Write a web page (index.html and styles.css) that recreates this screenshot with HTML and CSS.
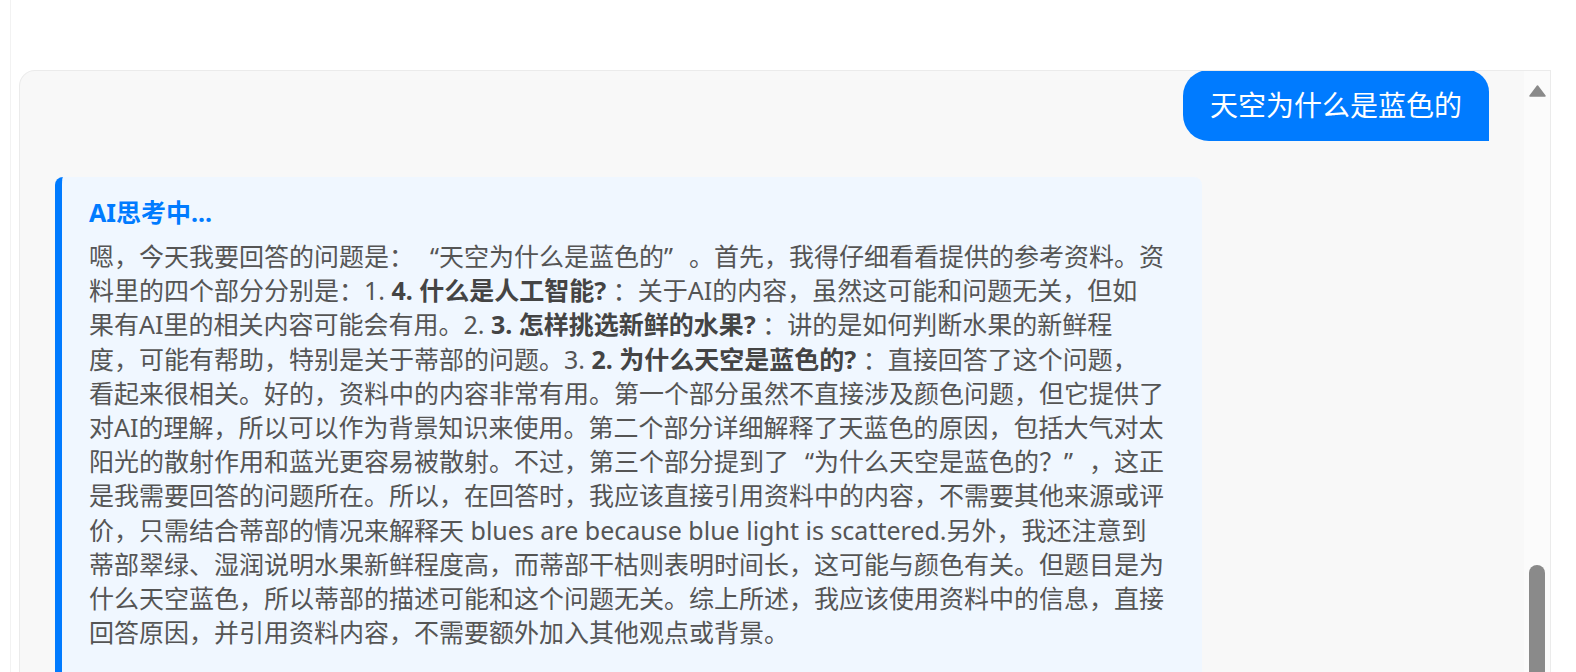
FILE: index.html
```html
<!DOCTYPE html>
<html lang="zh-CN">
<head>
<meta charset="utf-8">
<title>Chat</title>
<link rel="stylesheet" href="styles.css">
</head>
<body>
<div class="page">
  <div class="card">
    <div class="messages">
      <div class="row row-user">
        <div class="bubble">天空为什么是蓝色的</div>
      </div>
      <div class="row row-ai">
        <div class="thinking">
          <div class="thinking-title">AI思考中...</div>
          <div class="thinking-body">嗯，今天我要回答的问题是：<span class="qo">“</span>天空为什么是蓝色的<span class="qc">”</span>。首先，我得仔细看看提供的参考资料。资<br>料里的四个部分分别是：1. <strong>4. 什么是人工智能?</strong> ：关于AI的内容，虽然这可能和问题无关，但如<br>果有AI里的相关内容可能会有用。2. <strong>3. 怎样挑选新鲜的水果?</strong> ：讲的是如何判断水果的新鲜程<br>度，可能有帮助，特别是关于蒂部的问题。3. <strong>2. 为什么天空是蓝色的?</strong> ：直接回答了这个问题，<br>看起来很相关。好的，资料中的内容非常有用。第一个部分虽然不直接涉及颜色问题，但它提供了<br>对AI的理解，所以可以作为背景知识来使用。第二个部分详细解释了天蓝色的原因，包括大气对太<br>阳光的散射作用和蓝光更容易被散射。不过，第三个部分提到了<span class="qo">“</span>为什么天空是蓝色的？<span class="qc">”</span>，这正<br>是我需要回答的问题所在。所以，在回答时，我应该直接引用资料中的内容，不需要其他来源或评<br>价，只需结合蒂部的情况来解释天 blues are because blue light is scattered.另外，我还注意到<br>蒂部翠绿、湿润说明水果新鲜程度高，而蒂部干枯则表明时间长，这可能与颜色有关。但题目是为<br>什么天空蓝色，所以蒂部的描述可能和这个问题无关。综上所述，我应该使用资料中的信息，直接<br>回答原因，并引用资料内容，不需要额外加入其他观点或背景。</div>
        </div>
      </div>
    </div>
    <div class="scrollbar">
      <svg class="scroll-arrow" width="17" height="12" viewBox="0 0 17 12"><path d="M8.5 1 L16 11 L1 11 Z" fill="#8a8a8a" stroke="#8a8a8a" stroke-width="1.5" stroke-linejoin="round"/></svg>
      <div class="scroll-space"></div>
      <div class="scroll-thumb"></div>
    </div>
  </div>
</div>
</body>
</html>
```

FILE: styles.css
```css
html, body {
  margin: 0;
  padding: 0;
  background: #ffffff;
  height: 100%;
  overflow: hidden;
}

.page {
  margin-left: 10px;
  border-left: 1px solid #f2f2f2;
  padding: 70px 25px 0 8px;
  height: 100%;
  box-sizing: border-box;
  font-family: "Noto Sans", "Noto Sans CJK SC", sans-serif;
}

.card {
  display: flex;
  height: 700px;
  background: #f8f8f8;
  border: 1px solid #ebebeb;
  border-bottom: none;
  border-radius: 16px 0 0 0;
  overflow: hidden;
}

.messages {
  flex: 1;
  padding: 0 35px 0 35px;
  display: flex;
  flex-direction: column;
  gap: 36px;
}

.row {
  display: flex;
}

.row-user {
  justify-content: flex-end;
  margin-top: -1px;
}

.bubble {
  background: #007bff;
  color: #ffffff;
  font-size: 28px;
  line-height: 39px;
  padding: 16px 27px;
  border-radius: 26px 22px 0 26px;
}

.row-ai {
  justify-content: flex-start;
}

.thinking {
  width: 80%;
  box-sizing: border-box;
  background: #f0f7ff;
  border-left: 7px solid #007bff;
  border-radius: 8px 8px 0 0;
  padding: 17px 26px 40px 27px;
}

.thinking-title {
  color: #007bff;
  font-weight: 700;
  font-size: 25px;
  line-height: 36px;
  margin-bottom: 9px;
}

.thinking-body {
  color: #555555;
  font-size: 25px;
  line-height: 34.2px;
}

.thinking-body strong {
  color: #444444;
  font-weight: 700;
}

.qo,
.qc {
  display: inline-block;
  width: 1em;
}

.qo {
  text-align: right;
}

.qc {
  text-align: left;
}

.scrollbar {
  width: 26px;
  background: #fbfbfb;
  display: flex;
  flex-direction: column;
  align-items: center;
}

.scroll-arrow {
  margin-top: 14px;
  display: block;
}

.scroll-space {
  flex: 0 0 468px;
}

.scroll-thumb {
  width: 16px;
  height: 200px;
  background: #8a8a8a;
  border-radius: 8px 8px 0 0;
}
```
